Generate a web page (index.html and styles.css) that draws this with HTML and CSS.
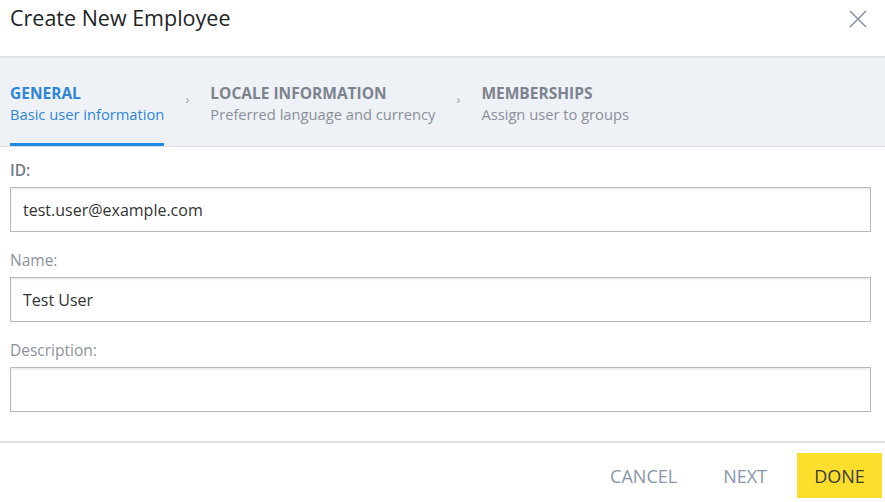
FILE: index.html
```html
<!DOCTYPE html>
<html lang="en">
<head>
<meta charset="utf-8">
<title>Create New Employee</title>
<link rel="stylesheet" href="styles.css">
</head>
<body>
<div class="dialog">
  <header class="dialog-header">
    <h1 class="dialog-title">Create New Employee</h1>
    <button class="close-btn" aria-label="Close">
      <svg width="18" height="18" viewBox="0 0 18 18"><path d="M1 1L17 17M17 1L1 17" stroke="#8a94a6" stroke-width="1.6" fill="none"/></svg>
    </button>
  </header>
  <nav class="stepper">
    <div class="step active">
      <div class="step-title">GENERAL</div>
      <div class="step-sub">Basic user information</div>
    </div>
    <span class="chev">›</span>
    <div class="step">
      <div class="step-title">LOCALE INFORMATION</div>
      <div class="step-sub">Preferred language and currency</div>
    </div>
    <span class="chev">›</span>
    <div class="step">
      <div class="step-title">MEMBERSHIPS</div>
      <div class="step-sub">Assign user to groups</div>
    </div>
  </nav>
  <main class="form">
    <label class="field">
      <span class="label label-strong">ID:</span>
      <input class="input" type="text" value="test.user@example.com">
    </label>
    <label class="field">
      <span class="label">Name:</span>
      <input class="input" type="text" value="Test User">
    </label>
    <label class="field">
      <span class="label">Description:</span>
      <input class="input" type="text" value="">
    </label>
  </main>
  <footer class="dialog-footer">
    <button class="btn btn-flat">CANCEL</button>
    <button class="btn btn-flat">NEXT</button>
    <button class="btn btn-primary">DONE</button>
  </footer>
</div>
</body>
</html>
```
FILE: styles.css
```css
* { box-sizing: border-box; }
html, body {
  margin: 0;
  padding: 0;
  background: #ffffff;
  font-family: "Open Sans", "Noto Sans", Arial, sans-serif;
}
.dialog {
  width: 885px;
  height: 502px;
  display: flex;
  flex-direction: column;
}
.dialog-header {
  height: 58px;
  display: flex;
  align-items: flex-start;
  justify-content: space-between;
  padding: 2px 18px 0 10px;
  border-bottom: 2px solid #e3e5ea;
}
.dialog-title {
  margin: 0;
  font-size: 21.5px;
  font-weight: 400;
  line-height: 32px;
  color: #222428;
}
.close-btn {
  margin-top: 8px;
  padding: 0;
  border: 0;
  background: transparent;
  width: 18px;
  height: 18px;
  display: flex;
}
.stepper {
  height: 89px;
  background: #eef1f6;
  border-bottom: 1px solid #dadde3;
  display: flex;
  align-items: stretch;
  padding-left: 10px;
}
.step {
  padding-top: 24px;
  display: flex;
  flex-direction: column;
  border-bottom: 3px solid transparent;
}
.step.active {
  border-bottom-color: #1e88e5;
}
.step-title {
  font-size: 15.5px;
  font-weight: 700;
  line-height: 22px;
  color: #7c838e;
}
.step-sub {
  font-size: 14.7px;
  line-height: 20px;
  color: #8a9099;
}
.step.active .step-title,
.step.active .step-sub {
  color: #2f86d9;
}
.chev {
  width: 46px;
  text-align: center;
  font-size: 13px;
  color: #9aa1ab;
  padding-top: 31px;
  line-height: 20px;
}
.form {
  padding: 13px 14px 0 10px;
  display: flex;
  flex-direction: column;
  gap: 18px;
  flex: 0 0 auto;
}
.field {
  display: flex;
  flex-direction: column;
  gap: 7px;
}
.label {
  font-size: 15.5px;
  line-height: 20px;
  color: #8d939c;
}
.label-strong {
  font-weight: 600;
  color: #727985;
}
.input {
  height: 45px;
  width: 100%;
  border: 1px solid #b9b9b9;
  border-radius: 0;
  box-shadow: inset 0 2px 2px rgba(0,0,0,0.07);
  padding: 0 12px;
  font-family: "Open Sans", "Noto Sans", Arial, sans-serif;
  font-size: 16px;
  color: #333333;
  background: #ffffff;
  outline: none;
}
.dialog-footer {
  margin-top: 29px;
  border-top: 2px solid #dfe1e5;
  padding: 10px 3px 0 0;
  display: flex;
  justify-content: flex-end;
  align-items: center;
  gap: 2px;
}
.btn {
  height: 45px;
  border: 0;
  background: transparent;
  font-family: "Open Sans", "Noto Sans", Arial, sans-serif;
  font-size: 18px;
  font-weight: 400;
  padding: 0 22px;
}
.btn-flat {
  color: #8796ab;
}
.btn-primary {
  background: #fbdf2c;
  color: #3a3a3a;
  width: 85px;
  padding: 0;
  margin-left: 6px;
}
```
